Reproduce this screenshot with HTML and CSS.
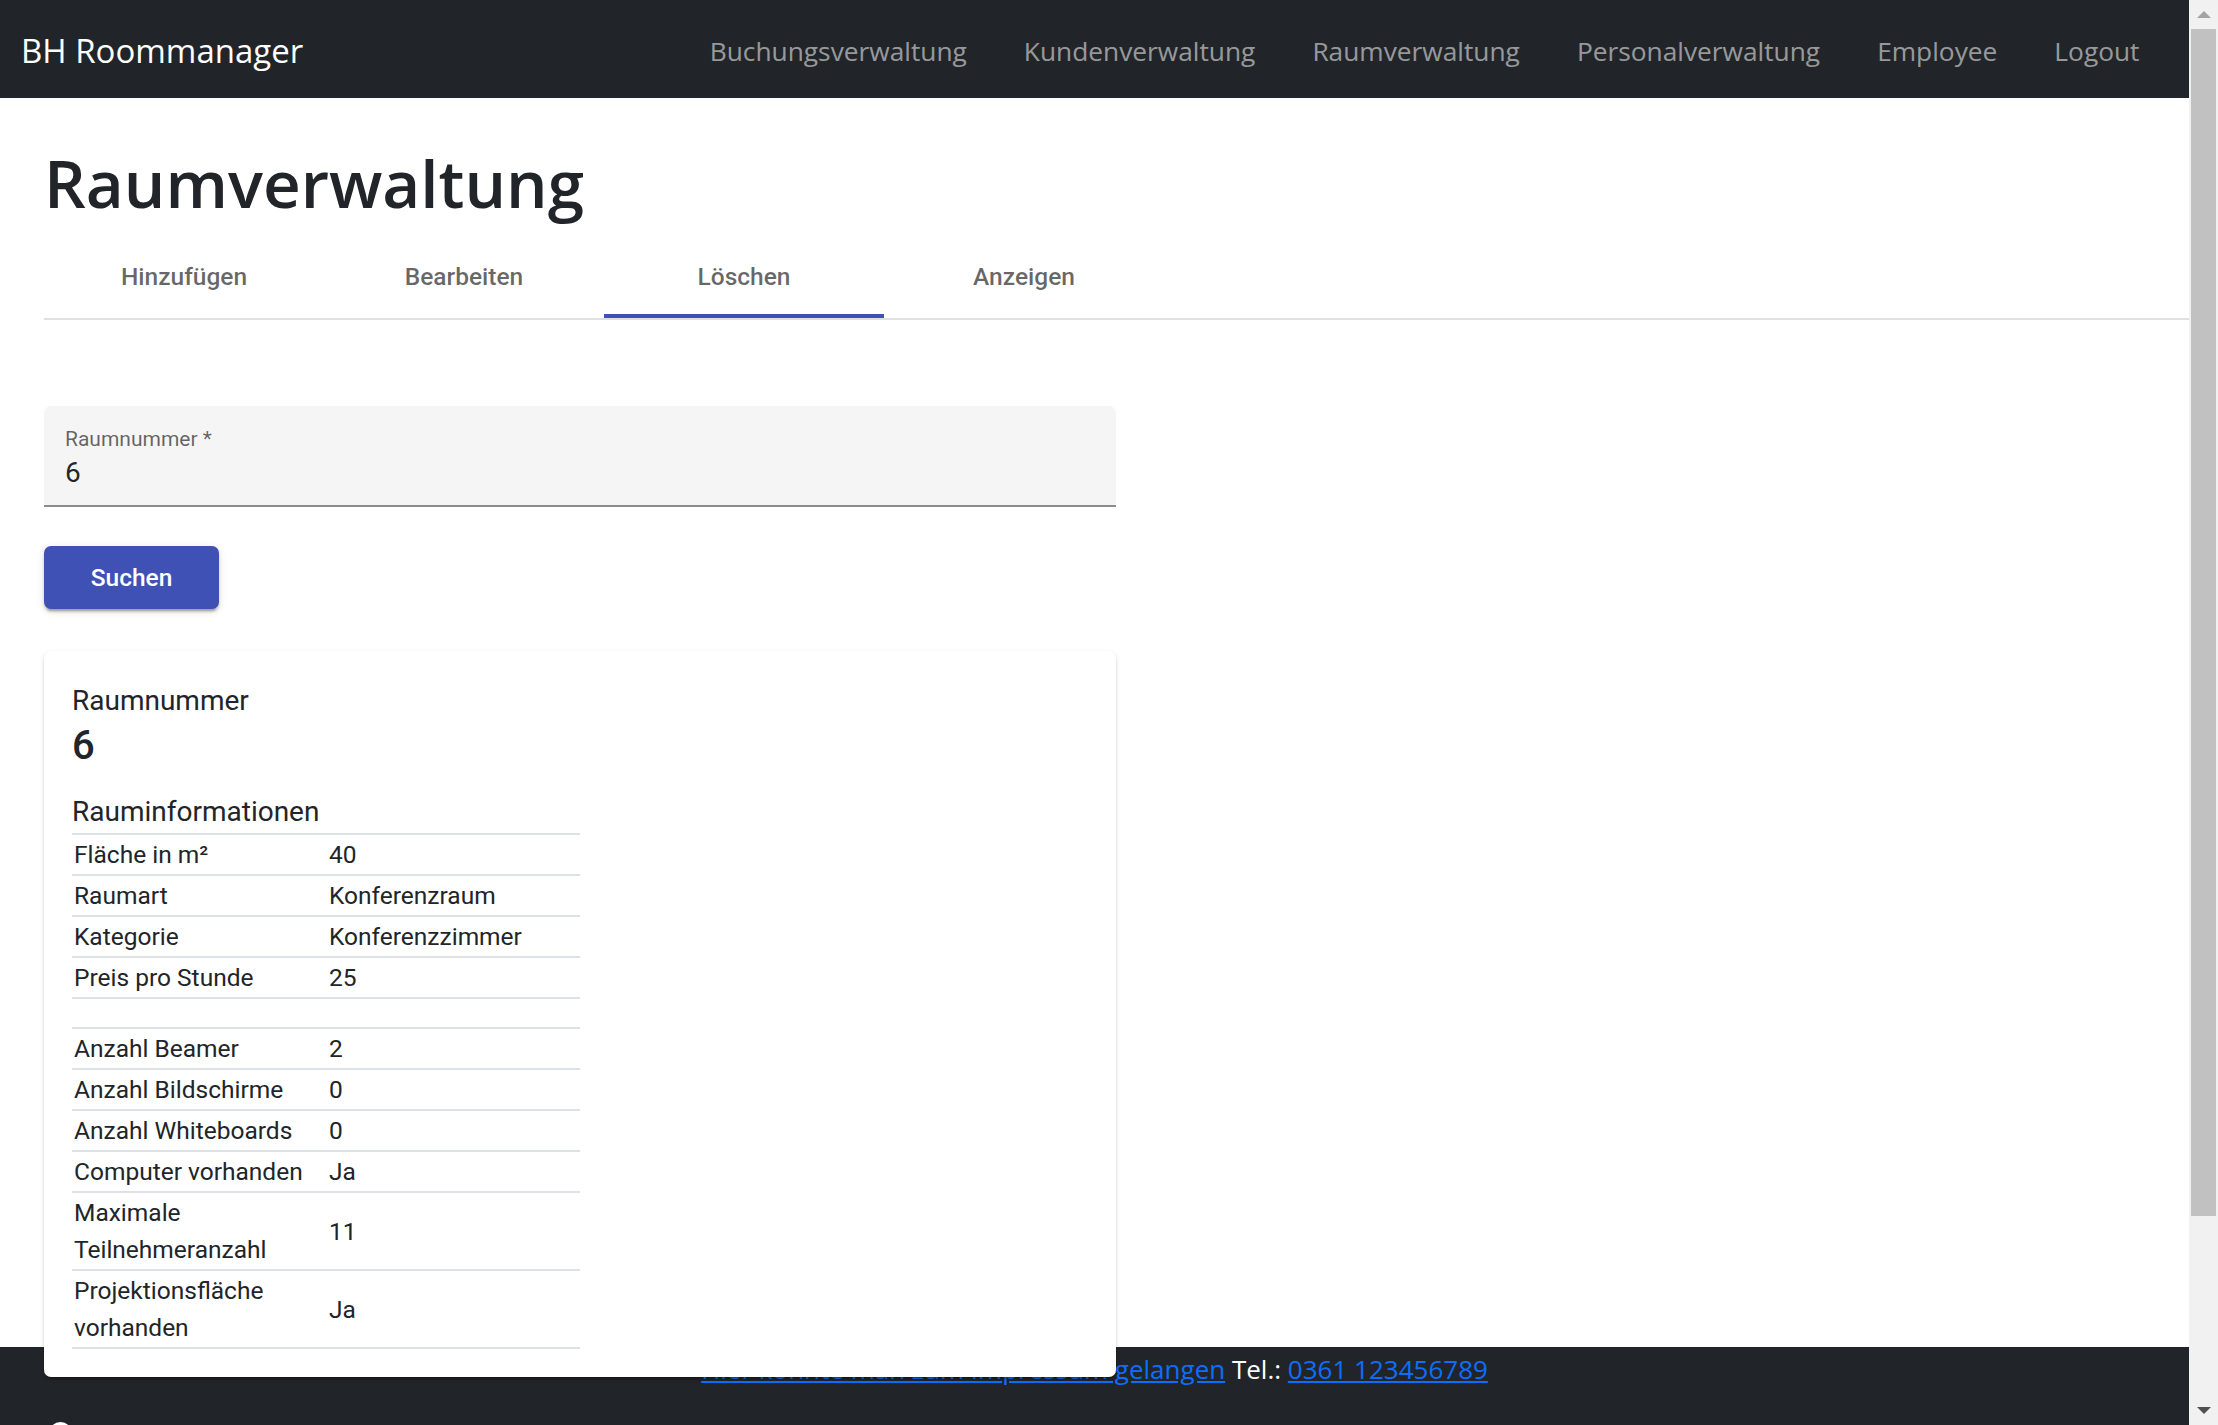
FILE: index.html
```html
<!DOCTYPE html>
<html lang="de">
<head>
<meta charset="utf-8">
<title>BH Roommanager</title>
<link rel="stylesheet" href="styles.css">
</head>
<body>
<div class="app">
  <div class="page">
    <nav class="navbar">
      <a class="brand" href="#">BH Roommanager</a>
      <ul class="nav">
        <li><a class="nav-link" href="#">Buchungsverwaltung</a></li>
        <li><a class="nav-link" href="#">Kundenverwaltung</a></li>
        <li><a class="nav-link" href="#">Raumverwaltung</a></li>
        <li><a class="nav-link" href="#">Personalverwaltung</a></li>
        <li><a class="nav-link" href="#">Employee</a></li>
        <li><a class="nav-link" href="#">Logout</a></li>
      </ul>
    </nav>
    <main class="main">
      <h1 class="title">Raumverwaltung</h1>
      <div class="tabs">
        <div class="tab">Hinzufügen</div>
        <div class="tab">Bearbeiten</div>
        <div class="tab active">Löschen</div>
        <div class="tab">Anzeigen</div>
      </div>
      <section class="tab-body">
        <div class="field">
          <label class="field-label">Raumnummer *</label>
          <div class="field-value">6</div>
        </div>
        <button class="btn" type="button">Suchen</button>
        <div class="card">
          <div class="card-label">Raumnummer</div>
          <div class="card-value">6</div>
          <div class="section-title">Rauminformationen</div>
          <table class="info">
            <colgroup><col class="c1"><col class="c2"></colgroup>
            <tbody>
              <tr><td>Fläche in m²</td><td>40</td></tr>
              <tr><td>Raumart</td><td>Konferenzraum</td></tr>
              <tr><td>Kategorie</td><td>Konferenzzimmer</td></tr>
              <tr><td>Preis pro Stunde</td><td>25</td></tr>
              <tr class="spacer"><td></td><td></td></tr>
              <tr><td>Anzahl Beamer</td><td>2</td></tr>
              <tr><td>Anzahl Bildschirme</td><td>0</td></tr>
              <tr><td>Anzahl Whiteboards</td><td>0</td></tr>
              <tr><td>Computer vorhanden</td><td>Ja</td></tr>
              <tr><td>Maximale Teilnehmeranzahl</td><td>11</td></tr>
              <tr class="last"><td>Projektionsfläche vorhanden</td><td>Ja</td></tr>
            </tbody>
          </table>
        </div>
      </section>
    </main>
    <footer class="footer">
      <p class="footer-line"><a href="#">Hier konnte man zum Impressum gelangen</a> Tel.: <a href="#">0361 123456789</a></p>
      <div class="footer-icons"><span class="dot"></span></div>
    </footer>
  </div>
  <div class="scrollbar">
    <div class="sb-btn"><svg width="14" height="7" viewBox="0 0 14 7"><polygon points="0,7 7,0 14,7" fill="#a3a3a3"/></svg></div>
    <div class="sb-thumb"></div>
    <div class="sb-track"></div>
    <div class="sb-btn"><svg width="14" height="7" viewBox="0 0 14 7"><polygon points="0,0 14,0 7,7" fill="#505050"/></svg></div>
  </div>
</div>
</body>
</html>
```
FILE: styles.css
```css
html, body {
  margin: 0;
  padding: 0;
  height: 100%;
  overflow: hidden;
}
body {
  font-family: "Open Sans", "Noto Sans", sans-serif;
  color: #212529;
  background: #fff;
}
.app {
  display: flex;
  height: 100vh;
}
.page {
  flex: 1;
  min-width: 0;
  display: flex;
  flex-direction: column;
  overflow: hidden;
}

/* navbar */
.navbar {
  flex: none;
  height: 98px;
  box-sizing: border-box;
  padding: 3px 21px 0 21px;
  background: #212529;
  display: flex;
  align-items: center;
  justify-content: space-between;
}
.brand {
  color: #fff;
  text-decoration: none;
  font-size: 33px;
  line-height: 42px;
}
.nav {
  list-style: none;
  margin: 0;
  padding: 0;
  display: flex;
}
.nav-link {
  display: block;
  padding: 0 28.5px;
  font-size: 26.3px;
  line-height: 42px;
  color: rgba(255, 255, 255, 0.55);
  text-decoration: none;
}

/* main */
.main {
  flex: none;
  height: 1249px;
  padding-left: 44px;
}
.title {
  margin: 43px 0 9px;
  font-size: 65.5px;
  font-weight: 600;
  line-height: 84px;
  color: #212529;
}
.tabs {
  display: flex;
  border-bottom: 2px solid #e0e0e0;
}
.tab {
  width: 280px;
  height: 84px;
  display: flex;
  align-items: center;
  justify-content: center;
  font-family: Roboto, sans-serif;
  font-weight: 500;
  font-size: 24.5px;
  color: rgba(0, 0, 0, 0.6);
}
.tab.active {
  box-shadow: inset 0 -4px 0 #3f51b5;
}
.tab-body {
  padding-top: 86px;
  font-family: Roboto, sans-serif;
}
.field {
  width: 1072px;
  height: 101px;
  box-sizing: border-box;
  padding: 21px 21px 0;
  background: #f5f5f5;
  border-radius: 7px 7px 0 0;
  border-bottom: 2px solid #8c8c8c;
}
.field-label {
  display: block;
  font-size: 21px;
  line-height: 25px;
  color: rgba(0, 0, 0, 0.6);
}
.field-value {
  margin-top: 3px;
  font-size: 28px;
  line-height: 36px;
  color: rgba(0, 0, 0, 0.87);
}
.btn {
  display: block;
  margin-top: 39px;
  width: 175px;
  height: 63px;
  border: 0;
  border-radius: 7px;
  background: #3f51b5;
  color: #fff;
  font-family: Roboto, sans-serif;
  font-weight: 500;
  font-size: 24.5px;
  box-shadow: 0 5px 2px -3px rgba(0, 0, 0, 0.2), 0 3px 3px 0 rgba(0, 0, 0, 0.14), 0 2px 8px 0 rgba(0, 0, 0, 0.12);
}
.card {
  position: relative;
  margin-top: 42px;
  width: 1072px;
  box-sizing: border-box;
  padding: 29px 28px 28px;
  background: #fff;
  border-radius: 7px;
  box-shadow: 0 3px 2px -2px rgba(0, 0, 0, 0.2), 0 2px 2px 0 rgba(0, 0, 0, 0.14), 0 2px 5px 0 rgba(0, 0, 0, 0.12);
  color: #212529;
}
.card-label {
  font-size: 28px;
  line-height: 42px;
}
.card-value {
  font-size: 40px;
  font-weight: 500;
  line-height: 48px;
}
.section-title {
  margin-top: 21px;
  font-size: 28px;
  line-height: 42px;
}
.info {
  width: 508px;
  table-layout: fixed;
  border-collapse: collapse;
  font-size: 24.5px;
  line-height: 37px;
}
.info .c1 { width: 256px; }
.info .c2 { width: 252px; }
.info td {
  padding: 1px 2px;
  border-top: 2px solid #dee2e6;
  vertical-align: middle;
}
.info td + td {
  padding-left: 1px;
}
.info tr.spacer td {
  height: 28px;
  padding: 0;
}
.info tr.last td {
  border-bottom: 2px solid #dee2e6;
}

/* footer */
.footer {
  flex: none;
  height: 323px;
  background: #212529;
  color: #fff;
  padding-top: 1px;
  box-sizing: border-box;
}
.footer-line {
  margin: 0;
  text-align: center;
  font-size: 26px;
  line-height: 42px;
}
.footer-line a {
  color: #0d6efd;
  text-decoration: underline;
}
.footer-icons {
  margin-top: 32px;
  padding-left: 49px;
  display: flex;
}
.dot {
  width: 23px;
  height: 23px;
  border-radius: 50%;
  background: #fff;
}

/* scrollbar */
.scrollbar {
  flex: none;
  width: 29px;
  background: #f1f1f1;
  display: flex;
  flex-direction: column;
  align-items: center;
}
.sb-btn {
  flex: none;
  width: 29px;
  height: 29px;
  display: flex;
  align-items: center;
  justify-content: center;
}
.sb-thumb {
  flex: none;
  width: 25px;
  height: 1187px;
  background: #c1c1c1;
}
.sb-track {
  flex: 1;
}
```
